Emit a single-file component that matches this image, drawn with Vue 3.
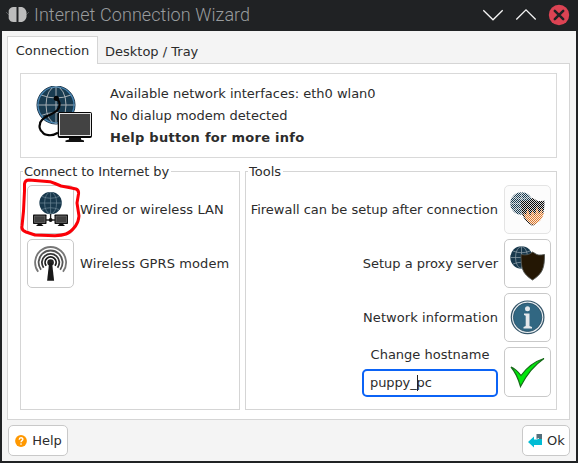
<script setup>
import { ref } from 'vue'

const tabs = ['Connection', 'Desktop / Tray']
const active = ref('Connection')
</script>

<template>
  <div class="window">
    <header class="titlebar">
      <svg class="app-icon" width="24" height="18" viewBox="0 0 24 18">
        <path d="M1 6l3 3M24 6l-3 3" stroke="#55585a" stroke-width="1" fill="none" />
        <path d="M11.500 1v15H8.500Q5 16 3.700 12.500V4.500Q5 1 8.500 1zM13.500 1v15H17Q20.500 15 21.500 11V6Q20.500 2 17 1z" fill="#bdbdbd" />
      </svg>
      <h1>Internet Connection Wizard</h1>
      <svg class="controls" width="90" height="24" viewBox="0 0 90 24">
        <path d="M3.300 7.200l9.700 9.600 9.700-9.600M36.300 16.500L46 6.900l9.700 9.600" fill="none" stroke="#f5f5f5" stroke-width="1.300" />
        <circle cx="79" cy="12" r="10.200" fill="#dc4353" />
        <path d="M74.800 7.800l8.400 8.400M83.200 7.800l-8.400 8.400" stroke="#202224" stroke-width="2.500" stroke-linecap="round" />
      </svg>
    </header>

    <main class="client">
      <nav class="tabs">
        <button v-for="t in tabs" :key="t" :class="['tab', { active: t === active }]" @click="active = t">{{ t }}</button>
      </nav>

      <section class="page">
        <div class="info">
          <svg width="60" height="60" viewBox="0 0 60 60">
            <circle cx="22" cy="19" r="19" fill="#193b50" stroke="#173044" stroke-width="1" />
            <g fill="none" stroke="#a8afb4" stroke-width="1">
              <path d="M3 19h38M22 0v38M7 9q15 6 30 0M7 29.500q15-6 30 0" />
              <ellipse cx="22" cy="19" rx="10" ry="18.500" />
            </g>
            <circle cx="22" cy="19" r="18" fill="none" stroke="#4886b4" stroke-width="1.200" />
            <path d="M22.300 12.300C27 16 26 21 23.300 24.300C20 27.500 17 28 13.300 30C8 33 6 35 6 38C4.500 42 6 44 8.300 46C10 49 12 49 15 49.200C19 49.500 21 48.500 24 46.700" fill="none" stroke="#050505" stroke-width="2.200" />
            <circle cx="22.300" cy="12.300" r="2.600" fill="#050505" />
            <path d="M35 51h12v2.500l3 1V56H31.500v-1.500l3.500-1z" fill="#111" />
            <rect x="23.700" y="26" width="34.300" height="26" rx="2" fill="#050505" />
            <rect x="25.500" y="27.500" width="31" height="22" fill="#434343" stroke="#e4e4e4" stroke-width="1" />
          </svg>
          <div class="info-text">
            <p>Available network interfaces: eth0 wlan0</p>
            <p>No dialup modem detected</p>
            <p><b>Help button for more info</b></p>
          </div>
        </div>

        <div class="groups">
          <section class="group connect">
            <h2>Connect to Internet by</h2>
            <div class="row">
              <button class="tool">
                <svg width="36" height="36" viewBox="0 0 36 36">
                  <circle cx="17.600" cy="11" r="11.200" fill="#18384c" />
                  <g fill="none" stroke="#6d8795" stroke-width=".7">
                    <path d="M6.500 11h22.500M17.600 0v22M9 4.500q8.500 3.500 17 0M9 17.500q8.500-3.500 17 0" />
                    <ellipse cx="17.600" cy="11" rx="6" ry="11" />
                  </g>
                  <path d="M17.600 22v5.500M12 28h12" stroke="#222" stroke-width="1.300" />
                  <circle cx="17.600" cy="28" r="1.900" fill="#111" />
                  <rect x="0" y="22.500" width="13.500" height="9.500" rx=".7" fill="#111" />
                  <rect x="21.500" y="22.500" width="13.500" height="9.500" rx=".7" fill="#111" />
                  <path d="M1.500 24h10.500v6.500H1.500zM23 24h10.500v6.500H23z" fill="#414141" stroke="#888" stroke-width=".5" />
                  <path d="M5 32h3.500l2 2h-7.500zM26.500 32H30l2 2h-7.500z" fill="#111" />
                </svg>
                <svg class="highlight" width="62" height="60" viewBox="0 0 62 60">
                  <path d="M4.500 6Q5 2 9 2L30 3.700L35 5.500L41 8L51.500 10L56 11Q59 12 58.500 16L57 25L59 38Q58.500 44 55.500 48Q51 54 46 56Q42 57.500 35 57.700L15 57L6 54Q1 52 2 48L3.500 33L4.500 13Z" fill="none" stroke="#fb0007" stroke-width="3" stroke-linejoin="round" />
                </svg>
              </button>
              <span>Wired or wireless LAN</span>
            </div>
            <div class="row">
              <button class="tool">
                <svg width="36" height="36" viewBox="0 0 36 36">
                  <g fill="none" stroke-width="1.800">
                    <path d="M13.200 19.800a5.500 5.500 0 1 1 8.800 0" stroke="#161616" />
                    <path d="M10.600 21.700a8.700 8.700 0 1 1 14 0" stroke="#333" />
                    <path d="M8 23.700a12 12 0 1 1 19.200 0" stroke="#555" />
                    <path d="M5.200 25.800a15.500 15.500 0 1 1 24.800 0" stroke="#777" />
                  </g>
                  <circle cx="17.600" cy="16.500" r="3.300" fill="#222" />
                  <path d="M16.100 17h3l2 17.700h-7z" fill="#181818" />
                </svg>
              </button>
              <span>Wireless GPRS modem</span>
            </div>
          </section>

          <section class="group tools">
            <h2>Tools</h2>
            <div class="row">
              <span class="tight">Firewall can be setup after connection</span>
              <button class="tool off" disabled>
                <svg width="36" height="36" viewBox="0 0 36 36">
                  <circle cx="11.500" cy="11.500" r="11.200" fill="#193b50" />
                  <path d="M.5 11.500h22M11.500 .5v22M3 5q8.500 3.500 17 0M3 18q8.500-3.500 17 0" fill="none" stroke="#8899a3" stroke-width=".7" />
                  <path d="M22.500 6q-4 4-11.500 2.500c0 13 1 19 11.500 25.500 10.500-6.500 12-12.500 12-25.500-8 1.500-8-.5-12-2.500z" fill="#050505" />
                  <path d="M13 20l3 3 1.500-7 2.500 8 2.500-6 2.500 5 2-9 2 8 3-6 .5 6 1.500-2c-1 6-4 10-10.500 13-6.500-3-9-7-10-13z" fill="#e07a2c" />
                </svg>
              </button>
            </div>
            <div class="row">
              <span class="tight">Setup a proxy server</span>
              <button class="tool">
                <svg width="36" height="36" viewBox="0 0 36 36">
                  <circle cx="11.500" cy="11.500" r="11.200" fill="#18384c" />
                  <g fill="none" stroke="#93a3ad" stroke-width=".7">
                    <path d="M.5 11.500h22M11.500 .5v22M3 5q8.500 3.500 17 0M3 18q8.500-3.500 17 0" />
                    <ellipse cx="11.500" cy="11.500" rx="6" ry="11" />
                  </g>
                  <path d="M22.500 6q-4 4-11.500 2.500c0 13 1 19 11.500 25.500 10.500-6.500 12-12.500 12-25.500-8 1.500-8-.5-12-2.500z" fill="#241704" stroke="#4f5350" stroke-width=".9" />
                </svg>
              </button>
            </div>
            <div class="row">
              <span class="wide">Network information</span>
              <button class="tool">
                <svg width="36" height="36" viewBox="0 0 36 36">
                  <circle cx="17.600" cy="17.300" r="16.300" fill="#e9eef1" stroke="#36566a" stroke-width="1.200" />
                  <circle cx="17.600" cy="17.300" r="14.200" fill="#316782" stroke="#264e65" stroke-width=".8" />
                  <circle cx="17.500" cy="8.800" r="2.500" fill="#e4e8eb" />
                  <path d="M14 13.500h5.500v12.500l2.500 1v1.500h-8.500V27l2.200-1V15.700l-1.700-.8z" fill="#e4e8eb" />
                </svg>
              </button>
            </div>
            <div class="row last">
              <label class="host">
                <span>Change hostname</span>
                <span class="entry">puppy_<i class="caret"></i>pc</span>
              </label>
              <button class="tool tall">
                <svg width="36" height="36" viewBox="0 0 36 36">
                  <path d="M1 13Q6 15 11 21.500 20 9 34 4.500 20 14 10.500 32.500 7 20 1 13z" fill="#00e80b" stroke="#176b19" stroke-width="1.200" />
                </svg>
              </button>
            </div>
          </section>
        </div>
      </section>

      <footer class="actions">
        <button class="action">
          <svg width="12" height="12" viewBox="0 0 12 12">
            <circle cx="6" cy="6" r="5.900" fill="#ff9800" />
            <path d="M4.200 4.700C4.200 2.100 7.900 2.200 7.900 4.300 7.900 5.600 6 5.700 6 7.200" fill="none" stroke="#fff" stroke-width="1.300" />
            <circle cx="6" cy="9.100" r=".8" fill="#fff" />
          </svg>
          <span>Help</span>
        </button>
        <button class="action ok">
          <svg width="15" height="14" viewBox="0 0 15 14">
            <path d="M8.500 0H14v6h-3V4L8.500 5z" fill="#546e7a" />
            <path d="M0 8l6-5.500V5.500h3.500V5H14v6H6v2.500z" fill="#00bcd4" />
          </svg>
          <span>Ok</span>
        </button>
      </footer>
    </main>
  </div>
</template>

<style>
body { margin: 0; background: #202224; }
</style>

<style scoped>
* { box-sizing: border-box; }
.window {
  width: 578px; height: 463px; background: #202224; color: #2c2c2c;
  font: 13px/16px "DejaVu Sans", sans-serif; padding: 0 2px 2px;
  display: flex; flex-direction: column;
}
button { font: inherit; color: inherit; margin: 0; }
svg { display: block; flex: none; }
.titlebar { height: 31px; flex: none; display: flex; align-items: center; padding: 0 7px 2px 3px; }
.app-icon { margin-top: 1px; }
h1 { margin: 0 auto 0 5px; font: 300 18px/24px Roboto, sans-serif; letter-spacing: .08px; color: #999c9e; white-space: nowrap; }
.controls { margin-top: 1px; margin-right: -1px; }
.client { flex: 1; min-height: 0; background: #f4f4f4; padding: 5px 6px 5px 5px; display: flex; flex-direction: column; }
.tabs { display: flex; height: 27px; flex: none; }
.tab { border: 0; background: none; padding: 4px 7px 0; height: 27px; white-space: nowrap; }
.tab.active { width: 91px; height: 28px; border: 1px solid #d5d5d5; border-bottom: 0; background: #fff; padding: 0; z-index: 1; }
.page { height: 357px; flex: none; background: #fff; border: 1px solid #d5d5d5; padding: 9px 12px; }
.info { height: 85px; border: 1px solid #d9d9d9; display: flex; align-items: flex-start; padding: 12px 0 0 13px; }
.info-text { margin: -3px 0 0 16px; }
.info-text p { margin: 0; line-height: 22px; }
.info-text b { letter-spacing: .27px; }
.groups { display: flex; gap: 5px; margin-top: 6px; }
.group { height: 246px; position: relative; display: flex; flex-direction: column; gap: 5px; padding: 21px 6px 0; isolation: isolate; }
.group::before { content: ""; position: absolute; inset: 7px 0 0; border: 1px solid #d5d5d5; z-index: -1; }
.connect { flex: none; width: 220px; padding-left: 7px; }
.connect span { letter-spacing: .1px; }
.connect h2 { letter-spacing: -.08px; }
.tools { flex: 1; min-width: 0; }
.wide { letter-spacing: .08px; }
.tight { letter-spacing: -.02px; }
h2 { position: absolute; top: 0; left: 3px; margin: 0; padding: 0 2px 0 1px; font: inherit; background: #fff; white-space: nowrap; }
.row { display: flex; align-items: center; gap: 6px; height: 49px; flex: none; white-space: nowrap; }
.tools .row { justify-content: flex-end; }
.tool { position: relative; width: 47px; height: 49px; flex: none; background: #fff; border: 1px solid #c9c9c9; border-radius: 5px; padding: 6px 0 0 5px; display: grid; place-items: start; }
.tool.off { background: #fcfcfc; border-color: #e4e4e4; }
/* checkerboard stipple over the icon of an insensitive button */
.tool.off::after {
  content: ""; position: absolute; left: 5px; top: 6px; width: 36px; height: 36px;
  background: repeating-conic-gradient(#fcfcfc 0 25%, transparent 0 50%) 0 0 / 2px 2px;
  opacity: .85;
}
.highlight { position: absolute; left: -8px; top: -8px; }
.tools .row.last { height: 50px; }
.tool.tall { height: 50px; }
.host { width: 136px; display: flex; flex-direction: column; align-items: center; height: 50px; justify-content: space-between; }
.entry { width: 136px; height: 28px; border: 2px solid #0b63f6; border-radius: 5px; padding: 2px 6px; display: flex; align-items: center; letter-spacing: -.1px; }
.caret { width: 1px; height: 16px; margin-right: -1px; background: #222; }
.actions { display: flex; justify-content: space-between; padding: 5px 0 0 1px; }
.action { height: 31px; width: 60px; background: #fff; border: 1px solid #c9c9c9; border-radius: 5px; display: flex; align-items: center; justify-content: center; gap: 4px; padding: 0; }
.action span { position: relative; left: 1px; }
.action.ok { width: 48px; gap: 3px; }
</style>
